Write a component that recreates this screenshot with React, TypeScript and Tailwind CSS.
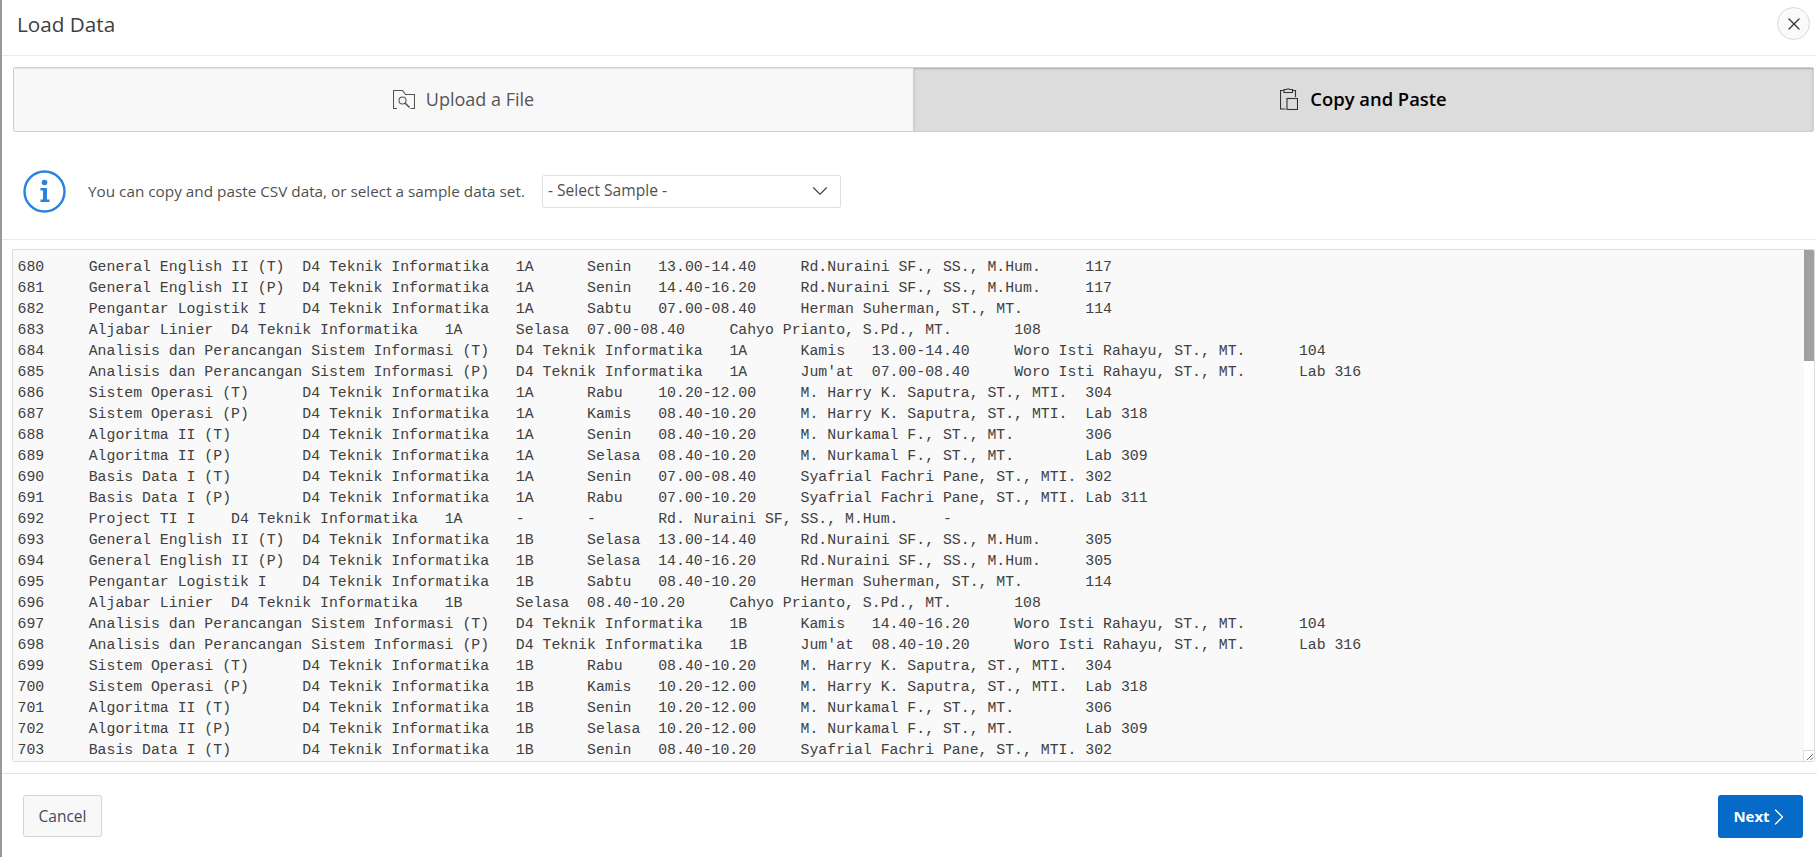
import { ChevronDown, ChevronRight, X } from "lucide-react";

const row = (...cols: string[]) => cols.join("\t");

const GE = "D4 Teknik Informatika";
const ANALISIS = "Analisis dan Perancangan Sistem Informasi";
const NUR = "Rd.Nuraini SF., SS., M.Hum.";
const HARRY = "M. Harry K. Saputra, ST., MTI.";
const KAMAL = "M. Nurkamal F., ST., MT.";
const SYAF = "Syafrial Fachri Pane, ST., MTI.";
const WORO = "Woro Isti Rahayu, ST., MT.";

const CSV = [
  row("680", "General English II (T)", GE, "1A", "Senin", "13.00-14.40", NUR, "117"),
  row("681", "General English II (P)", GE, "1A", "Senin", "14.40-16.20", NUR, "117"),
  row("682", "Pengantar Logistik I", GE, "1A", "Sabtu", "07.00-08.40", "Herman Suherman, ST., MT.", "114"),
  row("683", "Aljabar Linier", GE, "1A", "Selasa", "07.00-08.40", "Cahyo Prianto, S.Pd., MT.", "108"),
  row("684", `${ANALISIS} (T)`, GE, "1A", "Kamis", "13.00-14.40", WORO, "104"),
  row("685", `${ANALISIS} (P)`, GE, "1A", "Jum'at", "07.00-08.40", WORO, "Lab 316"),
  row("686", "Sistem Operasi (T)", GE, "1A", "Rabu", "10.20-12.00", HARRY, "304"),
  row("687", "Sistem Operasi (P)", GE, "1A", "Kamis", "08.40-10.20", HARRY, "Lab 318"),
  row("688", "Algoritma II (T)", GE, "1A", "Senin", "08.40-10.20", KAMAL, "306"),
  row("689", "Algoritma II (P)", GE, "1A", "Selasa", "08.40-10.20", KAMAL, "Lab 309"),
  row("690", "Basis Data I (T)", GE, "1A", "Senin", "07.00-08.40", SYAF, "302"),
  row("691", "Basis Data I (P)", GE, "1A", "Rabu", "07.00-10.20", SYAF, "Lab 311"),
  row("692", "Project TI I", GE, "1A", "-", "-", "Rd. Nuraini SF, SS., M.Hum.", "-"),
  row("693", "General English II (T)", GE, "1B", "Selasa", "13.00-14.40", NUR, "305"),
  row("694", "General English II (P)", GE, "1B", "Selasa", "14.40-16.20", NUR, "305"),
  row("695", "Pengantar Logistik I", GE, "1B", "Sabtu", "08.40-10.20", "Herman Suherman, ST., MT.", "114"),
  row("696", "Aljabar Linier", GE, "1B", "Selasa", "08.40-10.20", "Cahyo Prianto, S.Pd., MT.", "108"),
  row("697", `${ANALISIS} (T)`, GE, "1B", "Kamis", "14.40-16.20", WORO, "104"),
  row("698", `${ANALISIS} (P)`, GE, "1B", "Jum'at", "08.40-10.20", WORO, "Lab 316"),
  row("699", "Sistem Operasi (T)", GE, "1B", "Rabu", "08.40-10.20", HARRY, "304"),
  row("700", "Sistem Operasi (P)", GE, "1B", "Kamis", "10.20-12.00", HARRY, "Lab 318"),
  row("701", "Algoritma II (T)", GE, "1B", "Senin", "10.20-12.00", KAMAL, "306"),
  row("702", "Algoritma II (P)", GE, "1B", "Selasa", "10.20-12.00", KAMAL, "Lab 309"),
  row("703", "Basis Data I (T)", GE, "1B", "Senin", "08.40-10.20", SYAF, "302"),
].join("\n");

function FolderSearchIcon() {
  return (
    <svg width="22" height="19" viewBox="0 0 22 19" fill="none" stroke="#555" strokeWidth="1.1">
      <path d="M4 18.5H.5V.5h9l3 4h9v14h-4" />
      <circle cx="9.5" cy="10.5" r="3.5" />
      <path d="M12 13l4.5 4.5" strokeWidth="1.6" />
    </svg>
  );
}

function ClipboardIcon() {
  return (
    <svg width="18" height="22" viewBox="0 0 18 22" fill="none" stroke="#333" strokeWidth="1.1">
      <path d="M5.5 21H.5V2.5H4M12.5 2.5h3V9" />
      <path d="M4 4.5v-3h2.6a2 2 0 0 1 3 0H12.5v3z" />
      <rect x="7" y="10.5" width="10.5" height="11" />
    </svg>
  );
}

function InfoIcon() {
  return (
    <svg width="43" height="43" viewBox="0 0 43 43" className="shrink-0">
      <circle cx="21.5" cy="21.5" r="20" fill="none" stroke="#2a82dc" strokeWidth="2.4" />
      <circle cx="21.5" cy="12.5" r="2.8" fill="#2a82dc" />
      <path d="M17.5 18h6.5v11.5h2.5V32h-9v-2.5H20V20.5h-2.5z" fill="#2a82dc" />
    </svg>
  );
}

export default function App() {
  return (
    <div className="h-[857px] overflow-hidden flex flex-col bg-white border-l-2 border-[#999] font-['Open_Sans',sans-serif] text-[#404040]">
      {/* Title bar */}
      <div className="h-[56px] shrink-0 flex items-center justify-between pl-[15px] pr-[7px] border-b border-[#ececec]">
        <h1 className="text-[20.7px] leading-none text-[#404040] -mt-[7px]">Load Data</h1>
        <button className="w-[33px] h-[33px] -mt-[8px] rounded-full border border-[#d8d8d8] bg-[#fafafa] flex items-center justify-center text-[#333]">
          <X size={20} strokeWidth={1.5} />
        </button>
      </div>

      {/* Tabs */}
      <div className="mt-[11px] ml-[11px] mr-[3px] h-[65px] shrink-0 flex rounded-[2px] border border-[#cfcfcf]">
        <button className="flex-1 flex items-center justify-center gap-[11px] bg-[#f8f8f8] text-[18px] text-[#555] shadow-[inset_0_1px_1px_rgba(0,0,0,0.08)]">
          <FolderSearchIcon />
          Upload a File
        </button>
        <button className="flex-1 flex items-center justify-center gap-[12px] pb-[2px] bg-[#dcdcdc] border-l border-[#cfcfcf] text-[18.4px] font-semibold text-black shadow-[inset_0_1px_2px_rgba(0,0,0,0.22)]">
          <ClipboardIcon />
          Copy and Paste
        </button>
      </div>

      {/* Sample picker */}
      <div className="h-[108px] shrink-0 flex items-center pt-[11px] pl-[21px] border-b border-[#ececec]">
        <InfoIcon />
        <p className="ml-[22px] text-[15.3px] text-[#505050] whitespace-nowrap">
          You can copy and paste CSV data, or select a sample data set.
        </p>
        <div className="ml-[17px] w-[299px] h-[33px] flex items-center justify-between pl-[5px] pr-[7px] rounded-[2px] border border-[#dfdfdf] bg-white text-[15.6px] text-[#505050]">
          - Select Sample -
          <ChevronDown size={26} strokeWidth={1} className="text-[#444]" />
        </div>
      </div>

      {/* CSV input */}
      <div className="flex-1 min-h-0 flex flex-col pt-[9px] pb-[11px] pl-[10px] pr-[2px] border-b border-[#e4e4e4]">
        <div className="relative flex-1 min-h-0 rounded-[2px] border border-[#dcdcdc] bg-white overflow-hidden">
          <textarea
            readOnly
            defaultValue={CSV}
            wrap="off"
            className="block w-[calc(100%-10px)] h-full resize-none overflow-hidden whitespace-pre bg-[#f9f9f9] pl-[4.5px] pt-[6.5px] outline-none font-['Liberation_Mono',monospace] text-[14.84px] leading-[21px] text-[#404040] [tab-size:8]"
          />
          <div className="absolute top-0 right-0 w-[10px] h-[111px] bg-[#a0a0a0]" />
          <div className="absolute bottom-0 right-0 w-[11px] h-[11px] bg-white border-l border-t border-[#dcdcdc] flex items-end justify-end">
            <svg width="8" height="8" viewBox="0 0 8 8" stroke="#666" strokeWidth="1">
              <path d="M1 7l6-6M4.5 7L7 4.5" />
            </svg>
          </div>
        </div>
      </div>

      {/* Footer */}
      <div className="h-[83px] shrink-0 flex items-start justify-between pt-[21px] pl-[21px] pr-[14px]">
        <button className="w-[79px] h-[42px] pt-[2px] rounded-[3px] border border-[#d4d4d4] bg-[#f8f8f8] text-[15.5px] text-[#3b4a63]">
          Cancel
        </button>
        <button className="w-[85px] h-[43px] rounded-[3px] bg-[#056ac8] flex items-center justify-center text-[15px] font-bold text-white">
          Next
          <ChevronRight size={28} strokeWidth={1.1} className="-mx-[5px]" />
        </button>
      </div>
    </div>
  );
}
